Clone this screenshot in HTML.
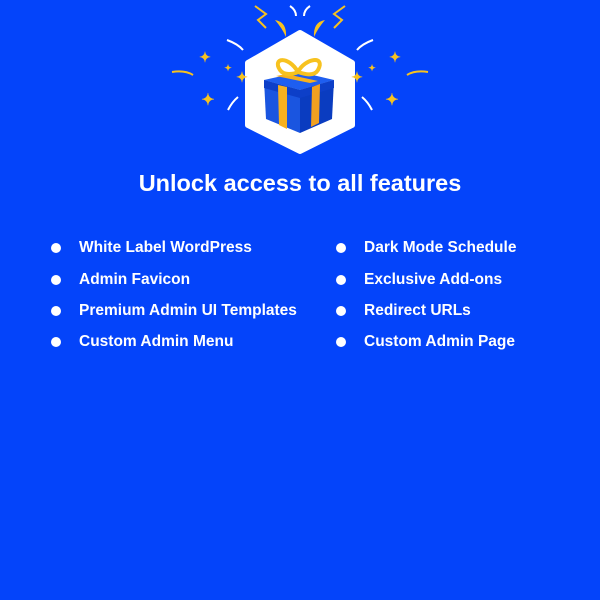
<!DOCTYPE html>
<html><head><meta charset="utf-8"><style>
*{margin:0;padding:0;box-sizing:border-box}
body{width:600px;height:600px;background:#0444fa;font-family:"Liberation Sans",sans-serif;color:#fff;position:relative;overflow:hidden}
h1{position:absolute;top:170px;left:0;width:600px;text-align:center;font-size:23.5px;font-weight:bold}
.it{position:absolute;font-size:15.5px;font-weight:bold;white-space:nowrap}
.it::before{content:"";position:absolute;left:-28px;top:4px;width:10px;height:10px;border-radius:50%;background:#fff}
</style></head><body>
<svg width="600" height="160" style="position:absolute;top:0;left:0">
<polygon points="300,33 352,63 352,125 300,151 248,125 248,63" fill="#fff" stroke="#fff" stroke-width="6" stroke-linejoin="round"/>
<polygon points="264,80 300,72 334,80 300,90" fill="#1e5ef0"/>
<polygon points="264,80 300,90 300,133 266,119" fill="#1a55e0"/>
<polygon points="300,90 334,80 332,119 300,133" fill="#0a3cc0"/>
<polygon points="264,80 300,90 334,80 334,88 300,98 264,88" fill="#0d3fc8"/>
<polygon points="278,85 287,87 287,129 279,125" fill="#f7b11f"/>
<polygon points="312,87 320,84 319,123 311,127" fill="#f0a020"/>
<polygon points="276,76 310,83 318,81 286,74" fill="#f7b11f"/>
<path d="M298,72 C288,55 272,58 280,70 C284,76 294,74 298,72 C305,58 326,55 318,70 C314,77 304,74 298,72" fill="none" stroke="#f7c21f" stroke-width="4"/>
<g stroke="#f7c21f" stroke-width="2" fill="none">
<path d="M255,6 L266,14 L258,20 L266,28"/><path d="M345,6 L334,14 L342,20 L334,28"/>
<path d="M172,72 Q185,70 193,75"/><path d="M428,72 Q415,70 407,75"/>
</g>
<path d="M275,20 Q287,22 286,37 Q282,28 275,20Z" fill="#f7c21f"/>
<path d="M325,20 Q313,22 314,37 Q318,28 325,20Z" fill="#f7c21f"/>
<g stroke="#fff" stroke-width="2" fill="none">
<path d="M290,6 Q296,10 296,16"/><path d="M310,6 Q304,10 304,16"/>
<path d="M227,40 Q238,44 243,50"/><path d="M373,40 Q362,44 357,50"/>
<path d="M228,110 Q232,102 238,97"/><path d="M372,110 Q368,102 362,97"/>
</g>
<g fill="#f7c21f" font-size="14" text-anchor="middle" font-weight="bold">
<text x="205" y="62">✦</text><text x="228" y="71" font-size="9">✦</text><text x="242" y="82">✦</text><text x="208" y="105" font-size="16">✦</text>
<text x="395" y="62">✦</text><text x="372" y="71" font-size="9">✦</text><text x="357" y="82">✦</text><text x="392" y="105" font-size="16">✦</text>
</g>
</svg>
<h1>Unlock access to all features</h1>
<div class="it" style="left:79px;top:239px">White Label WordPress</div>
<div class="it" style="left:79px;top:271px">Admin Favicon</div>
<div class="it" style="left:79px;top:302px">Premium Admin UI Templates</div>
<div class="it" style="left:79px;top:333px">Custom Admin Menu</div>
<div class="it" style="left:364px;top:239px">Dark Mode Schedule</div>
<div class="it" style="left:364px;top:271px">Exclusive Add-ons</div>
<div class="it" style="left:364px;top:302px">Redirect URLs</div>
<div class="it" style="left:364px;top:333px">Custom Admin Page</div>
</body></html>
